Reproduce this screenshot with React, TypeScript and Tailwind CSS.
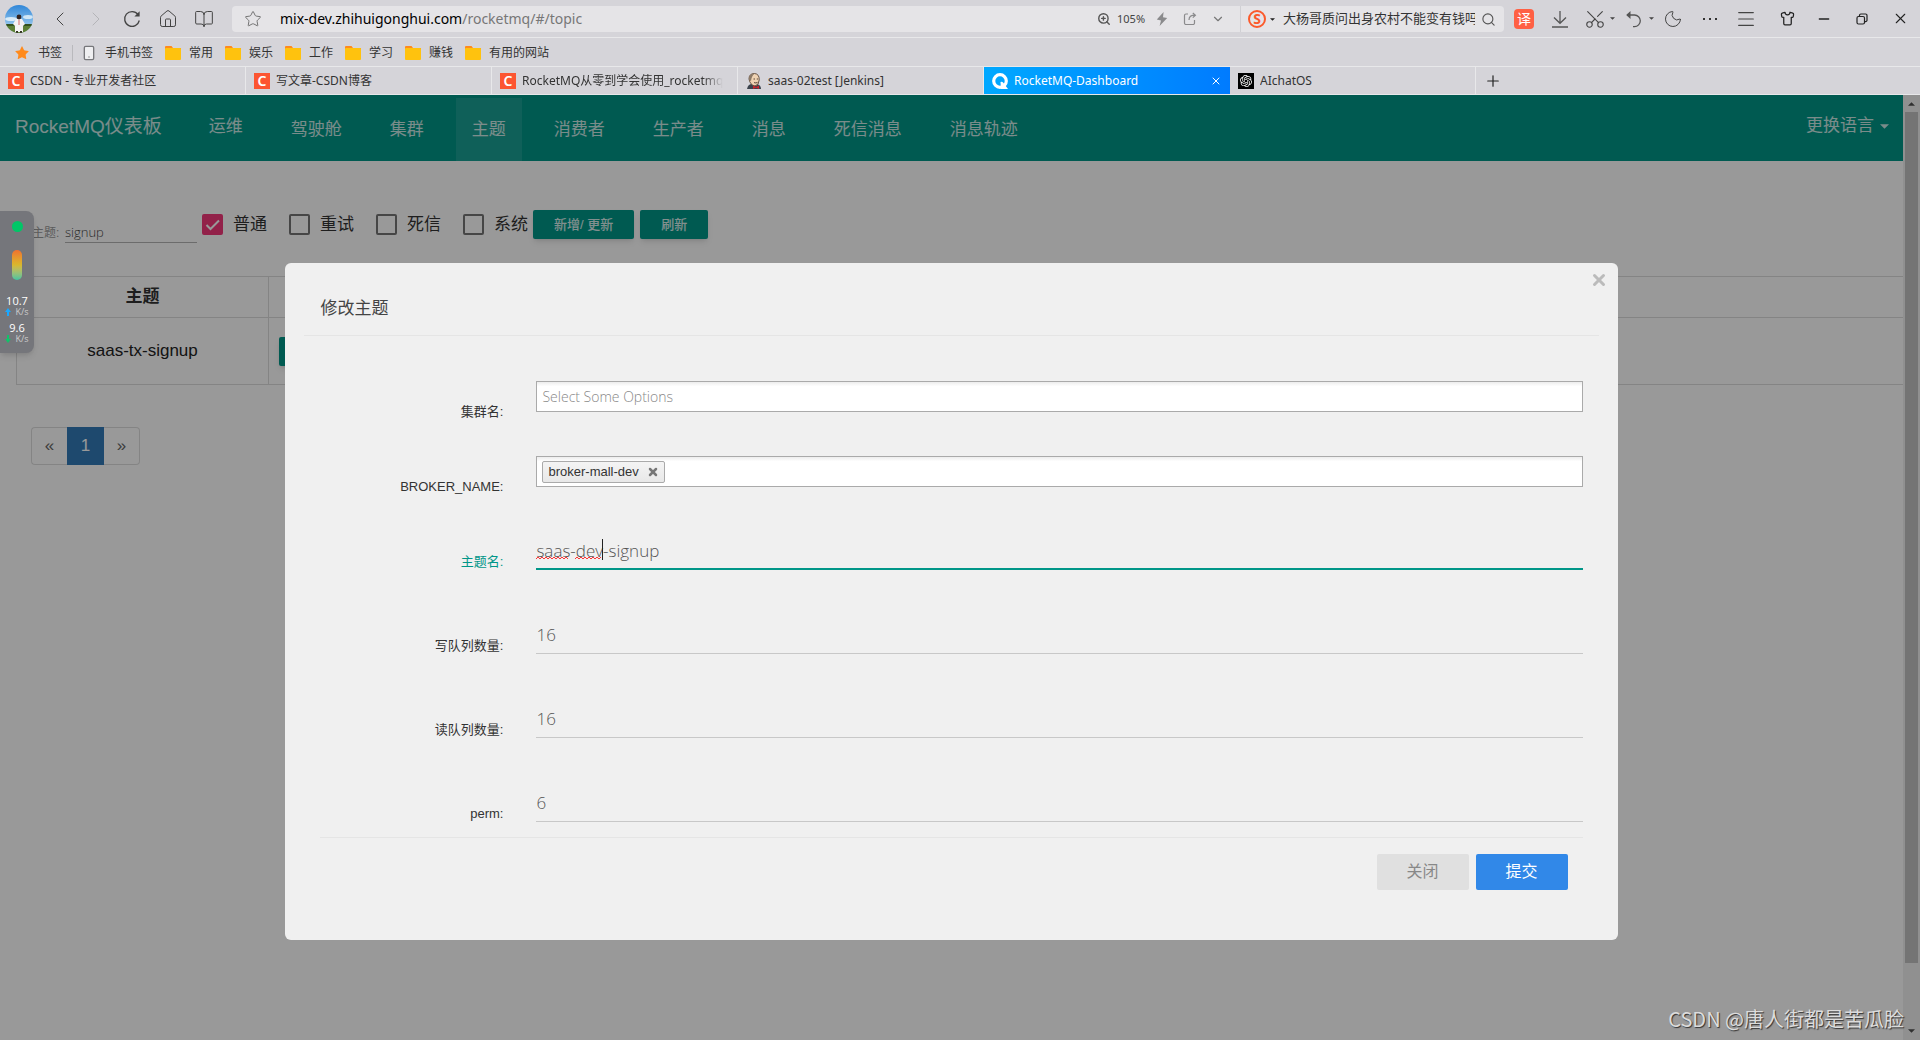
import React, { useState } from "react";
import {
  BookOpen,
  ChevronDown,
  ChevronLeft,
  ChevronRight,
  House,
  Menu,
  Minus,
  Moon,
  Plus,
  Scissors,
  Search,
  Shirt,
  Smartphone,
  Star,
  X,
  ZoomIn,
} from "lucide-react";
import { SiOpenai } from "react-icons/si";

const chromeFont = "font-['Noto_Sans','Noto_Sans_CJK_SC',sans-serif]";
const pageFont = "font-['Liberation_Sans','Noto_Sans_CJK_SC',sans-serif]";
const inputFont = "font-['Open_Sans','Noto_Sans_CJK_SC',sans-serif]";

const folders = ["常用", "娱乐", "工作", "学习", "赚钱", "有用的网站"];

const navItems = [
  "驾驶舱",
  "集群",
  "主题",
  "消费者",
  "生产者",
  "消息",
  "死信消息",
  "消息轨迹",
];

const filters = [
  { id: "normal", label: "普通" },
  { id: "retry", label: "重试" },
  { id: "dlq", label: "死信" },
  { id: "system", label: "系统" },
];

function Avatar() {
  return (
    <svg className="w-7 h-7" viewBox="0 0 28 28">
      <defs>
        <clipPath id="avatar">
          <circle cx="14" cy="14" r="14" />
        </clipPath>
        <linearGradient id="sky" x1="0" y1="0" x2="0" y2="1">
          <stop offset="0" stopColor="#2f86d8" />
          <stop offset="1" stopColor="#b9dcf3" />
        </linearGradient>
      </defs>
      <g clipPath="url(#avatar)">
        <rect width="28" height="28" fill="url(#sky)" />
        <ellipse cx="6" cy="14" rx="6" ry="2" fill="#d8ebf8" />
        <ellipse cx="23" cy="12" rx="5" ry="2" fill="#cfe6f6" />
        <rect y="20" width="28" height="8" fill="#5c7f35" />
        <rect y="19" width="28" height="2" fill="#35521f" />
        <path d="M11 14 L17 14 L20 19 L18 21 L18 27 L10 27 L10 21 L8 19 Z" fill="#f4f2f2" />
        <circle cx="14" cy="12" r="2.4" fill="#33231f" />
        <path d="M14 15 L14 20" stroke="#d46a6a" strokeWidth="1" />
        <path d="M12 26 L12 28 M16 26 L16 28" stroke="#332" strokeWidth="2" />
      </g>
    </svg>
  );
}

function Reload() {
  return (
    <svg className="w-[18px] h-[18px]" viewBox="0 0 18 18" fill="none" stroke="#444" strokeWidth="1.3">
      <path d="M15 4.5 A7.4 7.4 0 1 0 16.3 10.5" />
      <path d="M16.6 1.2 L16.6 6.4 L11.4 6.4 Z" fill="#444" stroke="none" />
    </svg>
  );
}

function Undo() {
  return (
    <svg className="w-[18px] h-[18px]" viewBox="0 0 18 18" fill="none" stroke="#555" strokeWidth="1.3">
      <path d="M2 5 H9.5 A5.8 5.8 0 0 1 9.5 16.6 H8" />
      <path d="M5.5 1 L1.2 5 L5.5 9 Z" fill="#555" stroke="none" />
    </svg>
  );
}

function Download() {
  return (
    <svg className="w-[18px] h-[18px]" viewBox="0 0 18 18" fill="none" stroke="#555" strokeWidth="1.3">
      <path d="M9 1 V13 M3 7.5 L9 13.3 L15 7.5 M1 17 H17" />
    </svg>
  );
}

function ShareIcon() {
  return (
    <svg className="w-3.5 h-3.5" viewBox="0 0 14 14" fill="none" stroke="#8a8a8c" strokeWidth="1.2">
      <path d="M5 2 H3 A1.5 1.5 0 0 0 1.5 3.5 V11 A1.5 1.5 0 0 0 3 12.5 H10 A1.5 1.5 0 0 0 11.5 11 V8" />
      <path d="M6 8 C6 4.5 8 3.2 12 3.2 M9.8 1 L12.4 3.2 L9.8 5.6" />
    </svg>
  );
}

function Bolt() {
  return (
    <svg className="w-3 h-4" viewBox="0 0 12 16" fill="#8a8a8c">
      <path d="M7.6 1 L0.8 8.6 L5 9.4 L3.6 15 L11.2 7 L7 6.2 Z" />
    </svg>
  );
}

function Restore() {
  return (
    <svg className="w-3 h-3" viewBox="0 0 12 12" fill="none" stroke="#222" strokeWidth="1.2">
      <rect x="1" y="3.5" width="7.5" height="7.5" rx="1.5" />
      <path d="M3.5 3 V2.2 A1.4 1.4 0 0 1 5 1 H9.6 A1.4 1.4 0 0 1 11 2.4 V7.2 A1.4 1.4 0 0 1 9.6 8.6 H9" />
    </svg>
  );
}

function Caret({ className }: { className: string }) {
  return (
    <svg className={className} viewBox="0 0 10 5" fill="currentColor">
      <path d="M0 0 H10 L5 5 Z" />
    </svg>
  );
}

function Folder() {
  return (
    <svg className="w-4 h-3.5" viewBox="0 0 16 14">
      <path d="M0 1 Q0 0 1 0 H6.5 L8 2 H16 V5 H0 Z" fill="#ff8a1c" />
      <rect y="2" width="16" height="12" rx="1" fill="#ffc20e" />
    </svg>
  );
}

function CsdnIcon() {
  return (
    <span className="flex shrink-0 items-center justify-center w-4 h-4 bg-[#fc5531] text-white text-sm leading-4 font-semibold">
      C
    </span>
  );
}

function JenkinsIcon() {
  return (
    <svg className="w-4 h-4 shrink-0" viewBox="0 0 16 16">
      <path d="M1 16 Q2 11 6 11 H11 Q15 12 15 16 Z" fill="#3b434d" />
      <path d="M3 6 Q3 0.5 8.5 0.5 Q13.5 1 13.2 7 Q13 12 9 13 Q4 12 3 6 Z" fill="#efd3b3" stroke="#5b4636" strokeWidth="0.9" />
      <path d="M3 7 Q2.5 1 8.5 0.8 Q5.5 3 5 8 Z" fill="#8c7a68" />
      <path d="M7.5 6 H9 M10.8 6 H12 M8 9.6 Q10 10.4 11.5 9.4" stroke="#4a3728" strokeWidth="0.9" fill="none" />
      <path d="M7 12.5 L10 14 L13 12.5 V16 L10 14.8 L7 16 Z" fill="#c8242c" />
    </svg>
  );
}

function DashboardIcon() {
  return (
    <svg className="w-4 h-4 shrink-0" viewBox="0 0 16 16" fill="none">
      <circle cx="8" cy="8" r="6.3" stroke="#fff" strokeWidth="3.2" />
      <path d="M8.5 9 Q10 8 11.5 10 L16 16 H9 Z" fill="#fff" />
    </svg>
  );
}

const tabs = [
  { title: "CSDN - 专业开发者社区", icon: <CsdnIcon /> },
  { title: "写文章-CSDN博客", icon: <CsdnIcon /> },
  { title: "RocketMQ从零到学会使用_rocketmq", icon: <CsdnIcon />, clipped: true },
  { title: "saas-02test [Jenkins]", icon: <JenkinsIcon /> },
  { title: "RocketMQ-Dashboard", icon: <DashboardIcon />, active: true },
  {
    title: "AIchatOS",
    icon: (
      <span className="flex shrink-0 items-center justify-center w-4 h-4 bg-black text-white">
        <SiOpenai className="w-3 h-3" />
      </span>
    ),
  },
];

function Toolbar() {
  const button = "flex items-center justify-center h-full";

  return (
    <div className="flex items-center h-[37px] pl-[5px] pr-1.5 text-[#444]">
      <Avatar />
      <nav className="flex h-full ml-[9px] mr-2.5">
        <button aria-label="后退" className={`${button} w-9`}>
          <ChevronLeft className="w-6 h-6" strokeWidth={1} />
        </button>
        <button aria-label="前进" className={`${button} w-9 text-[#b4b4b8]`}>
          <ChevronRight className="w-6 h-6" strokeWidth={1} />
        </button>
        <button aria-label="刷新页面" className={`${button} w-9`}>
          <Reload />
        </button>
        <button aria-label="主页" className={`${button} w-9`}>
          <House className="w-5 h-5" strokeWidth={1.2} />
        </button>
        <button aria-label="阅读" className={`${button} w-9`}>
          <BookOpen className="w-5 h-5" strokeWidth={1.2} />
        </button>
      </nav>

      <div className="flex flex-1 items-center min-w-0 h-[26px] mt-px rounded bg-[#e5e4e7]">
        <Star className="w-[18px] h-[18px] ml-3 text-[#666]" strokeWidth={1.2} />
        <a href="#/topic" className="flex-1 ml-[18px] text-sm text-[#777] whitespace-nowrap">
          <span className="text-black">mix-dev.zhihuigonghui.com</span>
          /rocketmq/#/topic
        </a>
        <ZoomIn className="w-3.5 h-3.5 text-[#555]" strokeWidth={2.4} />
        <span className="w-[37px] pl-1.5 text-[11px]">105%</span>
        <button aria-label="加速" className={`${button} w-7`}>
          <Bolt />
        </button>
        <button aria-label="分享" className={`${button} w-7`}>
          <ShareIcon />
        </button>
        <button aria-label="更多地址" className={`${button} w-7`}>
          <ChevronDown className="w-3.5 h-3.5 text-[#777]" strokeWidth={2} />
        </button>
        <span className="w-px h-full ml-2 mr-[7px] bg-[#d0d0d4]" />
        <button aria-label="搜索引擎" className="flex items-center gap-1 text-[#222]">
          <span className="flex items-center justify-center w-[18px] h-[18px] rounded-full border-2 border-[#fb5a2c] text-[#fb5a2c] text-sm leading-3 font-bold">
            S
          </span>
          <Caret className="w-[5px] h-[3px]" />
        </button>
        <input
          aria-label="搜索"
          defaultValue="大杨哥质问出身农村不能变有钱吗"
          className="w-[192px] ml-2 text-[13px] text-[#333] outline-none"
        />
        <button aria-label="开始搜索" className="ml-1.5 mr-2">
          <Search className="w-[15px] h-[15px] text-[#555]" strokeWidth={1.8} />
        </button>
      </div>

      <button className="w-5 h-5 ml-2.5 rounded bg-[#ff6044] text-white text-sm leading-5">译</button>
      <button aria-label="下载" className={`${button} w-9 ml-2`}>
        <Download />
      </button>
      <button aria-label="截图" className={`${button} w-9 gap-1 pl-1.5`}>
        <Scissors className="w-[22px] h-[22px] shrink-0 -rotate-90" strokeWidth={1.2} />
        <Caret className="w-[5px] h-[3px] shrink-0" />
      </button>
      <button aria-label="撤销" className={`${button} w-9 gap-1.5 pl-1.5 ml-1`}>
        <Undo />
        <Caret className="w-[5px] h-[3px] shrink-0" />
      </button>
      <button aria-label="夜间模式" className={`${button} w-[38px]`}>
        <Moon className="w-5 h-5" strokeWidth={1.2} />
      </button>
      <button aria-label="更多" className={`${button} w-9 gap-1`}>
        <span className="w-0.5 h-0.5 bg-[#333]" />
        <span className="w-0.5 h-0.5 bg-[#333]" />
        <span className="w-0.5 h-0.5 bg-[#333]" />
      </button>
      <button aria-label="菜单" className={`${button} w-9`}>
        <Menu className="w-[22px] h-[22px]" strokeWidth={1.2} />
      </button>
      <button aria-label="皮肤" className={`${button} w-[46px]`}>
        <Shirt className="w-[15px] h-[15px] text-[#222]" strokeWidth={2} />
      </button>
      <button aria-label="最小化" className={`${button} w-7`}>
        <Minus className="w-4 h-4 text-[#222]" strokeWidth={2} />
      </button>
      <button aria-label="还原" className={`${button} w-12`}>
        <Restore />
      </button>
      <button aria-label="关闭窗口" className={`${button} w-7`}>
        <X className="w-[17px] h-[17px] text-[#222]" strokeWidth={1.5} />
      </button>
    </div>
  );
}

function Bookmarks() {
  return (
    <div className="flex items-center h-[29px] pt-0.5 pl-3.5 border-t border-[#e8e8ea] text-xs text-[#333]">
      <Star className="w-4 h-4" fill="#ff8a1c" stroke="none" />
      <span className="ml-2">书签</span>
      <span className="w-px h-4 ml-2.5 mr-2 bg-[#b9b9bd]" />
      <Smartphone className="w-4 h-4 text-[#77777b]" fill="#efeff1" strokeWidth={2} />
      <span className="ml-2">手机书签</span>
      {folders.map((name) => (
        <a href="#" key={name} className="flex items-center gap-2 ml-3">
          <Folder />
          {name}
        </a>
      ))}
    </div>
  );
}

function TabStrip() {
  return (
    <div className="flex h-[29px] border-y border-[#e8e8ea] text-xs text-[#333]">
      {tabs.map((tab) => (
        <div
          key={tab.title}
          className={`flex items-center w-[246px] pl-2 pr-2 gap-1.5 ${
            tab.active
              ? "bg-linear-to-r from-[#00a8ff] to-[#007bff] text-white"
              : "border-r border-[#e8e8ea]"
          }`}
        >
          {tab.icon}
          <span
            className={`flex-1 whitespace-nowrap overflow-hidden ${
              tab.clipped ? "mr-1.5 mask-r-from-90%" : ""
            }`}
          >
            {tab.title}
          </span>
          {tab.active && (
            <button aria-label="关闭标签页">
              <X className="w-3 h-3" strokeWidth={2} />
            </button>
          )}
        </div>
      ))}
      <button aria-label="新标签页" className="ml-2">
        <Plus className="w-[18px] h-[18px] text-[#222]" strokeWidth={1.6} />
      </button>
    </div>
  );
}

function NavBar() {
  return (
    <header className="flex h-[66px] bg-[#009688] text-[17px] text-white/80">
      <a href="#" className="px-[15px] pt-[18px] text-[19px] leading-7">
        RocketMQ仪表板
      </a>
      <a href="#" className="px-4 pt-[18px] leading-7 ml-4">
        运维
      </a>
      <ul className="flex gap-4 pt-[3px] ml-4">
        {navItems.map((item) => (
          <li key={item} className={item === "主题" ? "bg-white/10" : ""}>
            <a href="#" className="block px-4 pt-[18px] leading-7">
              {item}
            </a>
          </li>
        ))}
      </ul>
      <button className="flex items-center gap-1.5 h-[62px] ml-auto mr-3.5">
        更换语言
        <Caret className="w-[9px] h-[5px]" />
      </button>
    </header>
  );
}

function FilterBar() {
  const [checked, setChecked] = useState<string[]>(["normal"]);

  const toggle = (id: string) =>
    setChecked((prev) =>
      prev.includes(id) ? prev.filter((x) => x !== id) : [...prev, id],
    );

  return (
    <form className="flex items-center pl-8 text-[#333]">
      <label htmlFor="topic" className="w-[33px] pt-4 text-xs text-[#999] whitespace-nowrap">
        主题:
      </label>
      <input
        id="topic"
        defaultValue="signup"
        className={`w-[132px] h-[22px] mt-[15px] border-b border-[#b4b4b4] text-[13px] text-[#444] font-light outline-none ${inputFont}`}
      />
      <div className="flex gap-[22px] ml-[5px]">
        {filters.map(({ id, label }) => (
          <label key={id} className="flex items-center gap-2.5 text-[17px]">
            <span className="relative flex">
              <input
                type="checkbox"
                checked={checked.includes(id)}
                onChange={() => toggle(id)}
                className="appearance-none w-[21px] h-[21px] rounded-xs border-2 border-[#757575] checked:border-[#f4387b] checked:bg-[#f4387b]"
              />
              {checked.includes(id) && (
                <svg
                  className="absolute inset-0 pointer-events-none"
                  viewBox="0 0 21 21"
                  fill="none"
                  stroke="#fff"
                  strokeWidth="2"
                >
                  <path d="M4.5 11 L8.5 15 L17 6.5" />
                </svg>
              )}
            </span>
            {label}
          </label>
        ))}
      </div>
      <button
        type="button"
        className="h-[29px] ml-[5px] px-[21px] rounded-xs bg-[#009688] text-[13px] font-medium text-white/85 shadow-md"
      >
        新增/ 更新
      </button>
      <button
        type="button"
        className="h-[29px] ml-1.5 px-[21px] rounded-xs bg-[#009688] text-[13px] font-medium text-white/85 shadow-md"
      >
        刷新
      </button>
    </form>
  );
}

function TopicTable() {
  return (
    <table className="w-full table-fixed text-[17px] text-[#333]">
      <thead>
        <tr className="h-[41px] border-y border-[#ddd]">
          <th className="w-[252px] border-x border-[#ddd] font-bold">主题</th>
          <th />
        </tr>
      </thead>
      <tbody>
        <tr className="h-[67px] border-b border-[#ddd]">
          <td className="border-x border-[#ddd] text-center text-[#222]">saas-tx-signup</td>
          <td className="pl-2.5">
            <button className="block h-[29px] px-5 rounded-xs bg-[#009688] text-[13px] text-white shadow-md">
              状态
            </button>
          </td>
        </tr>
      </tbody>
    </table>
  );
}

function Pagination() {
  return (
    <ul className="flex w-fit ml-[31px] text-[17px] text-[#666]">
      <li>
        <button className="w-9 h-[38px] border border-r-0 border-[#ddd] rounded-l">«</button>
      </li>
      <li>
        <button className="w-[37px] h-[38px] bg-[#337ab7] text-white">1</button>
      </li>
      <li>
        <button className="w-9 h-[38px] border border-l-0 border-[#ddd] rounded-r">»</button>
      </li>
    </ul>
  );
}

type LineFieldProps = {
  id: string;
  label: string;
  value: string;
  focused?: boolean;
};

function LineField({ id, label, value, focused }: LineFieldProps) {
  return (
    <div className="flex h-[84px]">
      <label
        htmlFor={id}
        className={`w-[183px] pt-[30px] text-right text-[13px] leading-5 ${
          focused ? "text-[#009688]" : "text-[#333]"
        }`}
      >
        {label}:
      </label>
      <div className="relative flex-1 ml-[33px]">
        <input
          id={id}
          defaultValue={value}
          className={`block w-full h-12 pt-2.5 text-[17px] font-light text-[#555] outline-none ${inputFont} ${
            focused ? "border-b-2 border-[#009688]" : "border-b border-[#c8c8c8]"
          }`}
        />
        {focused && (
          <svg className="absolute left-0 top-4 w-32 h-7 pointer-events-none" viewBox="0 0 128 28" fill="none">
            <path
              d="M0 21 l2 -2 l2 2 l2 -2 l2 2 l2 -2 l2 2 l2 -2 l2 2 l2 -2 l2 2 l2 -2 l2 2 l2 -2 l2 2 l2 -2 l2 2 M39 21 l2 -2 l2 2 l2 -2 l2 2 l2 -2 l2 2 l2 -2 l2 2 l2 -2 l2 2 l2 -2 l2 2 l2 -2"
              stroke="#f33"
            />
            <path d="M66.5 1 V22" stroke="#222" />
          </svg>
        )}
      </div>
    </div>
  );
}

function TopicDialog() {
  const chosenBox =
    "flex items-center h-[31px] px-[5px] border border-[#aaa] bg-linear-to-b from-[#eee] from-1% to-white to-15%";

  return (
    <section
      role="dialog"
      aria-labelledby="dialog-title"
      className="relative w-[70%] mx-auto mt-[168px] px-[19px] pb-[50px] rounded-md bg-[#f0f0f0]"
    >
      <button aria-label="关闭对话框" className="absolute top-2 right-2.5 text-[#bbb]">
        <X className="w-[18px] h-[18px]" strokeWidth={4} />
      </button>
      <h2 id="dialog-title" className="h-[73px] px-4 pt-[34px] border-b border-[#e5e5e5] text-[17px] leading-6 text-[#444]">
        修改主题
      </h2>
      <form className="px-4 pt-[45px]">
        <div className="flex h-[75px]">
          <label htmlFor="cluster" className="w-[183px] pt-[21px] text-right text-[13px] leading-5 text-[#333]">
            集群名:
          </label>
          <div className="flex-1 ml-[33px]">
            <div className={chosenBox}>
              <input
                id="cluster"
                placeholder="Select Some Options"
                className={`w-full text-sm font-light outline-none placeholder:text-[#888] ${inputFont}`}
              />
            </div>
          </div>
        </div>
        <div className="flex h-[75px]">
          <label htmlFor="broker" className="w-[183px] pt-[21px] text-right text-[13px] leading-5 text-[#333]">
            BROKER_NAME:
          </label>
          <div className="flex-1 ml-[33px]">
            <div className={chosenBox}>
              <span className="flex items-center gap-2 h-[22px] px-[5px] rounded-xs border border-[#aaa] bg-linear-to-b from-[#f4f4f4] to-[#e8e8e8] text-[13px] text-[#333] whitespace-nowrap">
                broker-mall-dev
                <button type="button" aria-label="移除">
                  <X className="w-3 h-3 text-[#777]" strokeWidth={5} />
                </button>
              </span>
              <input id="broker" className="w-full outline-none" />
            </div>
          </div>
        </div>
        <div className="-mt-[9px]">
          <LineField id="topicName" label="主题名" value="saas-dev-signup" focused />
          <LineField id="writeQueue" label="写队列数量" value="16" />
          <LineField id="readQueue" label="读队列数量" value="16" />
          <LineField id="perm" label="perm" value="6" />
        </div>
        <footer className="flex justify-end gap-[7px] -mt-[21px] pt-4 pr-[15px] border-t border-[#e5e5e5] text-base">
          <button type="button" className="w-[92px] h-9 rounded-xs bg-[#e0e0e0] text-[#888]">
            关闭
          </button>
          <button type="button" className="w-[92px] h-9 rounded-xs bg-[#3188e8] text-white">
            提交
          </button>
        </footer>
      </form>
    </section>
  );
}

function ScrollBar() {
  return (
    <div className="flex flex-col items-center w-[17px] shrink-0 bg-[#f1f1f1] text-[#505050]">
      <Caret className="w-[7px] h-1 mt-[7px] mb-1.5 rotate-180" />
      <div className="w-[13px] h-[90%] bg-[#c1c1c1]" />
      <Caret className="w-[7px] h-1 mt-auto mb-[7px]" />
    </div>
  );
}

function SpeedWidget() {
  return (
    <aside
      className={`absolute left-0 top-[116px] flex flex-col items-center w-[34px] h-[142px] rounded-r-lg bg-[#75767b] shadow-md text-white ${inputFont}`}
    >
      <span className="w-[11px] h-[11px] mt-[10px] rounded-full bg-[#00c667]" />
      <span className="w-2.5 h-[30px] mt-[18px] rounded-full bg-linear-to-b from-[#f0702e] via-[#d8b82c] to-[#3cc4a0]" />
      <span className="mt-[15px] text-[11px] leading-3 font-medium">10.7</span>
      <span className="flex items-center gap-1 text-[9px] leading-[10px] text-[#ccc]">
        <svg className="w-1.5 h-2" viewBox="0 0 6 8" fill="#1aa7ff">
          <path d="M3 0 L6 4 H4 V8 H2 V4 H0 Z" />
        </svg>
        K/s
      </span>
      <span className="mt-[5px] text-[11px] leading-3 font-medium">9.6</span>
      <span className="flex items-center gap-1 text-[9px] leading-[10px] text-[#ccc]">
        <svg className="w-1.5 h-2" viewBox="0 0 6 8" fill="#12c26a">
          <path d="M3 8 L6 4 H4 V0 H2 V4 H0 Z" />
        </svg>
        K/s
      </span>
    </aside>
  );
}

export default function App() {
  return (
    <div className={`flex flex-col min-h-screen ${pageFont}`}>
      <div className={`bg-[#d5d4d9] ${chromeFont}`}>
        <Toolbar />
        <Bookmarks />
        <TabStrip />
      </div>

      <div className="relative flex flex-1 bg-white">
        <main className="flex-1 min-w-0">
          <NavBar />
          <div className="pt-[45px]">
            <FilterBar />
          </div>
          <div className="pt-[33px] pl-4">
            <TopicTable />
          </div>
          <div className="pt-[42px]">
            <Pagination />
          </div>
        </main>
        <ScrollBar />

        <div className="absolute inset-0 pr-[17px] bg-black/40">
          <TopicDialog />
        </div>
        <SpeedWidget />
        <p className="absolute right-4 bottom-1.5 font-['Noto_Sans_CJK_SC',sans-serif] text-xl leading-[30px] text-[#dcdcdc] [text-shadow:1px_1px_1px_#333]">
          CSDN @唐人街都是苦瓜脸
        </p>
      </div>
    </div>
  );
}
